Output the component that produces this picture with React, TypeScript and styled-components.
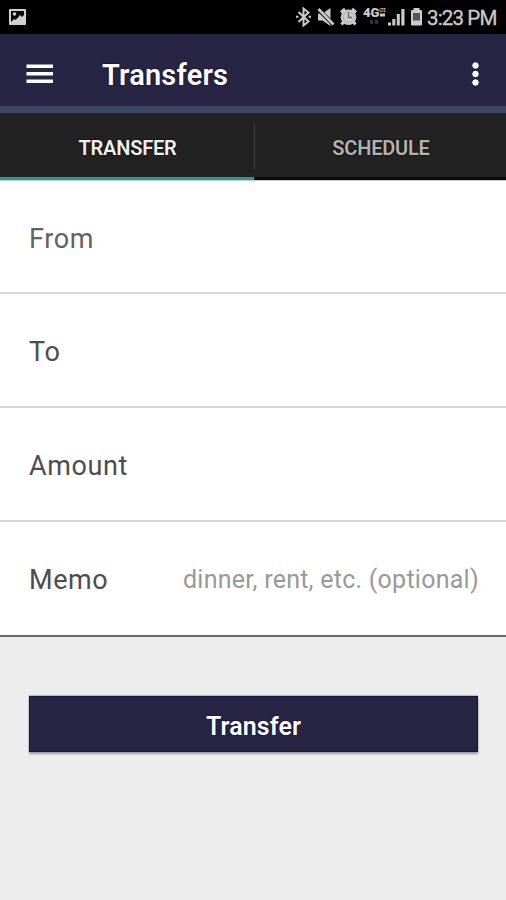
import React from "react";
import styled, { createGlobalStyle } from "styled-components";

const GlobalStyle = createGlobalStyle`
  * { box-sizing: border-box; }
  body { margin: 0; background: #ededed; font-family: Roboto, "Liberation Sans", sans-serif; }
  button, input { font: inherit; border: 0; padding: 0; background: none; }
`;

const Screen = styled.div`
  width: 506px;
  height: 900px;
  display: flex;
  flex-direction: column;
  background: #ededed;
  overflow: hidden;
`;

const StatusBar = styled.div`
  height: 34px;
  flex: none;
  display: flex;
  align-items: center;
  justify-content: space-between;
  background: #000;
  color: #cbcbcb;
  padding: 0 10px 0 8px;
`;

const StatusIcons = styled.svg`
  display: block;
  flex: none;
`;

const StatusGroup = styled.div`
  display: flex;
  align-items: center;
  gap: 4px;
`;

const Clock = styled.span`
  width: 69px;
  font-size: 20.5px;
  line-height: 34px;
  letter-spacing: -0.85px;
  white-space: nowrap;
  padding-top: 2px;
  -webkit-text-stroke: 0.3px #cbcbcb;
`;

const AppBar = styled.header`
  height: 79px;
  flex: none;
  display: flex;
  align-items: center;
  background: #282443;
  border-bottom: 7px solid #3c4863;
  padding: 7px 24px 0 26px;
`;

const IconButton = styled.button`
  display: flex;
  color: #fff;
`;

const Title = styled.h1`
  flex: 1;
  margin: 0 0 0 49px;
  padding-top: 3px;
  font-size: 29px;
  line-height: 36px;
  letter-spacing: 0.2px;
  font-weight: 600;
  color: #fff;
  text-shadow: 0 0 2px #08042a;
`;

const Tabs = styled.nav`
  height: 67px;
  flex: none;
  display: flex;
  background: #222;
`;

const Tab = styled.button<{ $active?: boolean }>`
  flex: ${(p) => (p.$active ? "0 0 254px" : "1")};
  padding: 6px 0 0 1px;
  font-size: 20px;
  line-height: 24px;
  letter-spacing: -0.2px;
  font-weight: 600;
  color: ${(p) => (p.$active ? "#f0f0f0" : "#b2b2b2")};
  border-bottom: 3px solid ${(p) => (p.$active ? "#229c8b" : "#090909")};
  text-shadow: 0 0 2px #000;
`;

const TabDivider = styled.div`
  width: 1px;
  height: 45px;
  margin-top: 11px;
  background: #414141;
`;

const Form = styled.form`
  display: flex;
  flex-direction: column;
  background: #fff;
  border-top: 1px solid #c8c8c8;
  border-bottom: 2px solid #696d69;
`;

const Row = styled.label<{ $edge?: boolean }>`
  height: ${(p) => (p.$edge ? 113 : 114)}px;
  display: flex;
  align-items: center;
  justify-content: space-between;
  padding: 4px 28px 0 29px;
  border-bottom: 2px solid #d8d8d8;
  &:last-child { border-bottom: 0; padding-top: 3px; }
`;

const Label = styled.span<{ $light?: boolean }>`
  font-size: 27px;
  color: ${(p) => (p.$light ? "#626262" : "#4d4d4d")};
  letter-spacing: 0.6px;
`;

const MemoInput = styled.input`
  width: 299px;
  height: 40px;
  margin: 0 -4px 2px 0;
  font-size: 25px;
  letter-spacing: 0.25px;
  outline: 0;
  &::placeholder { color: #999; opacity: 1; }
`;

const SubmitButton = styled.button`
  height: 56px;
  margin: 59px 28px 0 29px;
  flex: none;
  background: #282443;
  color: #fff;
  font-size: 25px;
  letter-spacing: 0.1px;
  font-weight: 600;
  padding-top: 4px;
  text-shadow: 0 0 2px #08042a;
  box-shadow: inset 0 0 0 1px #19133c, 0 2px 2px rgba(0, 0, 0, 0.35), 0 -1px 1px rgba(0, 0, 0, 0.2);
`;

const PictureIcon = () => (
  <StatusIcons width="19" height="18" viewBox="0 0 19 18">
    <rect x="1" y="1" width="17" height="16" rx="1" fill="#cfcfcf" />
    <path d="M3 3h13v7l-1-1-2 1-1 1-2-1-3 2-1-1-3 3z" fill="#080808" />
    <circle cx="6.5" cy="6" r="1.8" fill="#cfcfcf" />
    <path d="M9 11l3-4 2 2 2-2v5H9z" fill="#cfcfcf" />
  </StatusIcons>
);

const DeviceIcons = () => (
  <StatusIcons width="128" height="22" viewBox="295 7 128 22" fill="#cbcbcb">
    <path d="M298.5 13l10 9.5-5 4v-17l5 4-10 9.5M296 17.8h2.4M308.6 17.8h2.4" fill="none" stroke="#cbcbcb" strokeWidth="2" />
    <path d="M318 14.5h4.5l8-5.5v18l-8-5.5H318z" />
    <path d="M317.5 9.5l16 16" stroke="#000" strokeWidth="4" />
    <path d="M318.5 10l15 15.5" stroke="#cbcbcb" strokeWidth="2.6" />
    <circle cx="348.5" cy="18.2" r="7.8" />
    <path d="M341 13.5l4-3.5M352 10l4 3.5M343.5 23l-2 2.5M353.5 23l2 2.5" stroke="#cbcbcb" strokeWidth="3" />
    <circle cx="348.5" cy="18" r="5.3" fill="none" stroke="#a5a5a5" strokeWidth=".7" />
    <path d="M348.5 13v5.5h3.5" fill="none" stroke="#666" strokeWidth="1.3" />
    <text x="363" y="17.8" fontFamily="Roboto, sans-serif" fontSize="12.5" fontWeight="900" textLength="16.5" lengthAdjust="spacingAndGlyphs">4G</text>
    <text x="379.5" y="13.3" fontFamily="Roboto, sans-serif" fontSize="6" fontWeight="800" textLength="6" lengthAdjust="spacingAndGlyphs">LTE</text>
    <path d="M380 14.5h5v3h-5z" />
    <path d="M370 21h3v4h-3zM375 21h3v4h-3z" fill="#333" />
    <path d="M388 23.5h3v3h-3zM392.3 20h3v6.5h-3zM396.8 15h3v11.5h-3zM401.3 10h3.2v16.5h-3.2z" />
    <path d="M413.5 9h6v2h1.5q1 0 1 1v13.5q0 1-1 1h-9q-1 0-1-1V12q0-1 1-1h1.5z" />
    <path d="M413 14h7v7.5h-7z" fill="#555" />
  </StatusIcons>
);

const MenuIcon = () => (
  <svg width="27" height="22" viewBox="0 0 27 22" fill="currentColor">
    <path d="M.5 1.5h26.5v3.5H.5zM.5 9h26.5v3.5H.5zM.5 16.5h26.5v3.5H.5z" />
  </svg>
);

const MoreIcon = () => (
  <svg width="13" height="28" viewBox="0 0 13 28" fill="#fff" stroke="#100b30" strokeWidth="1">
    <circle cx="6.5" cy="5.5" r="3.8" />
    <circle cx="6.5" cy="14" r="3.8" />
    <circle cx="6.5" cy="22.5" r="3.8" />
  </svg>
);

export default function App() {
  return (
    <>
      <GlobalStyle />
      <Screen>
        <StatusBar>
          <PictureIcon />
          <StatusGroup>
            <DeviceIcons />
            <Clock>3:23 PM</Clock>
          </StatusGroup>
        </StatusBar>
        <AppBar>
          <IconButton aria-label="Menu"><MenuIcon /></IconButton>
          <Title>Transfers</Title>
          <IconButton aria-label="More options"><MoreIcon /></IconButton>
        </AppBar>
        <Tabs>
          <Tab $active>TRANSFER</Tab>
          <TabDivider />
          <Tab>SCHEDULE</Tab>
        </Tabs>
        <Form>
          <Row $edge><Label $light>From</Label></Row>
          <Row><Label>To</Label></Row>
          <Row><Label>Amount</Label></Row>
          <Row $edge>
            <Label>Memo</Label>
            <MemoInput placeholder="dinner, rent, etc. (optional)" />
          </Row>
        </Form>
        <SubmitButton type="button">Transfer</SubmitButton>
      </Screen>
    </>
  );
}
